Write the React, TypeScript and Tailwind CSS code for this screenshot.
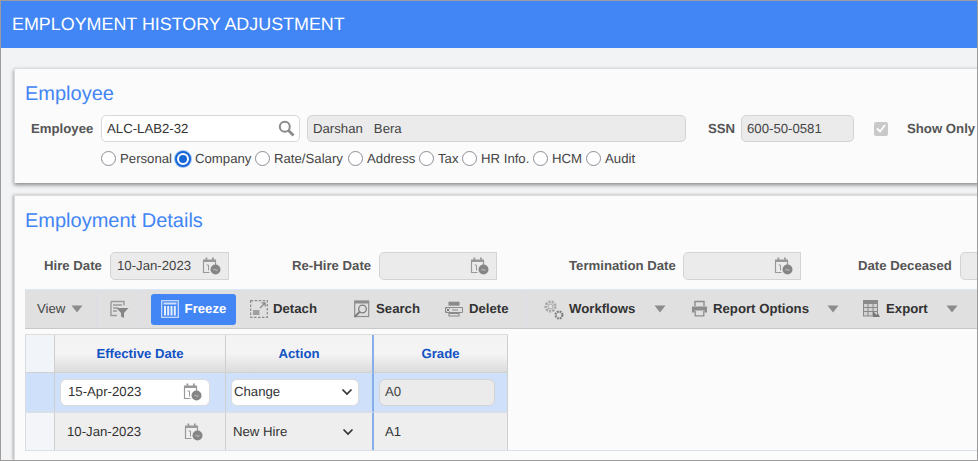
import React from "react";

const CalIcon = () => (
  <svg width="19" height="18" viewBox="0 0 19 18" fill="none" className="shrink-0">
    <path d="M1.500 3.500h12v5M7.500 15.500H1.500V3.500" stroke="#999" strokeWidth="1.200" />
    <rect x="1" y="2.500" width="13" height="2.500" fill="#999" />
    <rect x="3.500" y="0.500" width="1.800" height="4" fill="#999" />
    <rect x="10" y="0.500" width="1.800" height="4" fill="#999" />
    <path d="M4.500 8h2v5.500" stroke="#999" strokeWidth="1" />
    <circle cx="13.500" cy="12.500" r="5" fill="#858585" />
    <path d="M11.500 12.800q1-1 2 0t2 0" stroke="#d8d8d8" strokeWidth="0.900" />
  </svg>
);

const Arrow = ({ className = "" }: { className?: string }) => (
  <svg width="12" height="8" viewBox="0 0 12 8" className={`shrink-0 ${className}`}>
    <path d="M0.500 0.500h11L6 7.500z" fill="#8c8c8c" />
  </svg>
);

const FilterIcon = () => (
  <svg width="19" height="19" viewBox="0 0 19 19" fill="none">
    <path d="M1 1.500h13v4M1 1.500v14h6" stroke="#9a9a9a" strokeWidth="1.400" />
    <path d="M3 5h9M3 8h5M3 11h4" stroke="#9a9a9a" strokeWidth="1.300" />
    <path d="M6.500 8h12l-4.500 5v5l-3-1.500V13z" fill="#868686" />
  </svg>
);

const FreezeIcon = () => (
  <svg width="18" height="18" viewBox="0 0 18 18" fill="none">
    <rect x="0.700" y="0.700" width="16.600" height="16.600" stroke="#cfe0fb" strokeWidth="1.200" />
    <rect x="2.500" y="2.500" width="13" height="2" fill="#cfe0fb" />
    <path d="M4 6v9.500M7.200 6v9.500M10.500 6v9.500M13.800 6v9.500" stroke="#e6effd" strokeWidth="2" />
  </svg>
);

const DetachIcon = () => (
  <svg width="18" height="18" viewBox="0 0 18 18" fill="none">
    <rect x="0.700" y="0.700" width="16.600" height="16.600" stroke="#8a8a8a" strokeWidth="1.200" strokeDasharray="2.500 1.500" />
    <rect x="3" y="10" width="6.500" height="5" fill="#a0a0a0" />
    <path d="M10 8l5-5M11.500 2.800H15.200V6.500" stroke="#8a8a8a" strokeWidth="1.200" />
  </svg>
);

const SearchDocIcon = () => (
  <svg width="18" height="18" viewBox="0 0 18 18" fill="none">
    <rect x="1.700" y="1" width="14" height="15.500" stroke="#8d8d8d" strokeWidth="1.200" />
    <rect x="2" y="1" width="13.500" height="2.500" fill="#8d8d8d" />
    <circle cx="9.500" cy="9" r="3.800" stroke="#7d7d7d" strokeWidth="1.300" />
    <path d="M6.500 12l-5 5" stroke="#7d7d7d" strokeWidth="1.900" />
  </svg>
);

const DeleteIcon = () => (
  <svg width="19" height="16" viewBox="0 0 19 16" fill="none">
    <rect x="3.500" y="0.700" width="11" height="4" fill="#8a8a8a" />
    <path d="M0.500 6.500h17v5h-17z" stroke="#8a8a8a" strokeWidth="1" fill="#e0e0e0" />
    <path d="M1.500 7.500l3 3M4.500 7.500l-3 3" stroke="#777" strokeWidth="1" />
    <path d="M7 9h6M4 12.500h10v2.500H4z" stroke="#8a8a8a" strokeWidth="1.100" />
  </svg>
);

const GearsIcon = () => (
  <svg width="21" height="21" viewBox="0 0 21 21" fill="none">
    <circle cx="7.500" cy="7.500" r="4.800" stroke="#a8a8a8" strokeWidth="2.600" strokeDasharray="2.200 1.100" />
    <circle cx="7.500" cy="7.500" r="2.500" stroke="#a8a8a8" strokeWidth="1" />
    <circle cx="16" cy="16" r="3.400" stroke="#7d7d7d" strokeWidth="2.200" strokeDasharray="1.800 0.900" />
  </svg>
);

const PrinterIcon = () => (
  <svg width="17" height="17" viewBox="0 0 17 17" fill="none">
    <path d="M4 6V1.500h9V6" stroke="#8d8d8d" strokeWidth="1.400" />
    <path d="M1 6.500h15v6h-2.500v-2h-10v2H1z" fill="#8d8d8d" />
    <path d="M4.200 11v4.800h8.600V11" stroke="#8d8d8d" strokeWidth="1.300" />
  </svg>
);

const TableIcon = () => (
  <svg width="18" height="18" viewBox="0 0 18 18" fill="none">
    <rect x="0.500" y="0.500" width="14" height="15.500" fill="#d2d2d2" stroke="#8a8a8a" />
    <rect x="0.500" y="0.500" width="14" height="3.500" fill="#8a8a8a" />
    <path d="M5 4v12M10 4v12M1 7.500h13M1 11.500h13" stroke="#8a8a8a" />
    <path d="M10 11l3.500 4 1.500-1.500 2 3.500H10z" fill="#777" />
  </svg>
);

const Radio = ({ label, checked = false, className = "" }: { label: string; checked?: boolean; className?: string }) => (
  <label className={`flex items-center ${className}`}>
    {checked ? (
      <span className="w-[16px] h-[16px] rounded-full border-2 border-[#1666d8] bg-white flex items-center justify-center shadow-[0_0_0_1px_#9dc0f2]">
        <span className="w-[8px] h-[8px] rounded-full bg-[#1666d8]" />
      </span>
    ) : (
      <span className="w-[15px] h-[15px] rounded-full border-[1.5px] border-[#8e8c96] bg-white" />
    )}
    <span className="ml-[4px] text-[13.2px] text-[#444]">{label}</span>
  </label>
);

const Field = ({ children, className = "" }: { children?: React.ReactNode; className?: string }) => (
  <div className={`h-[27px] shrink-0 flex items-center rounded-[5px] border border-[#d3d3d3] bg-[#ebebeb] px-[5px] text-[13.2px] text-[#444] ${className}`}>
    {children}
  </div>
);

const DateField = ({ value, className = "" }: { value?: string; className?: string }) => (
  <div className={`h-[28px] shrink-0 flex items-center justify-between rounded-l-[5px] border border-[#d3d3d3] bg-[#ebebeb] pl-[6px] pr-[7px] text-[13.2px] text-[#444] whitespace-nowrap ${className}`}>
    <span>{value}</span>
    <CalIcon />
  </div>
);

const Bold = ({ children, className = "" }: { children: React.ReactNode; className?: string }) => (
  <span className={`text-[13.2px] font-bold text-[#555] whitespace-nowrap shrink-0 ${className}`}>{children}</span>
);

const ToolBtn = ({ icon, label, className = "" }: { icon: React.ReactNode; label: string; className?: string }) => (
  <div className={`flex items-center gap-[5px] shrink-0 text-[13.2px] font-bold text-[#333] ${className}`}>
    {icon}
    <span className="whitespace-nowrap">{label}</span>
  </div>
);

const Th = ({ children, className = "" }: { children: React.ReactNode; className?: string }) => (
  <div className={`flex items-center justify-center text-[13.2px] font-bold text-[#1253c4] bg-gradient-to-b from-[#f3f3f3] via-[#f4f4f4] to-[#dcdcdc] ${className}`}>
    {children}
  </div>
);

const Chevron = () => (
  <svg width="12" height="8" viewBox="0 0 12 8" fill="none">
    <path d="M1.500 1.500L6 6l4.500-4.500" stroke="#333" strokeWidth="1.700" />
  </svg>
);

export default function App() {
  return (
    <div className="w-[978px] h-[461px] overflow-hidden bg-[#f2f3f5] border border-[#9c9c9c] flex flex-col [text-rendering:geometricPrecision] font-['Liberation_Sans',Arial,sans-serif]">
      <header className="h-[47px] shrink-0 bg-[#4285f4] flex items-center pl-[11px] text-[17.9px] text-white">
        EMPLOYMENT HISTORY ADJUSTMENT
      </header>

      <section className="mt-[20px] ml-[13px] w-[1000px] h-[115px] shrink-0 bg-[#fbfbfb] border-t border-l border-[#dcdcdc] shadow-[0_2px_4px_rgba(0,0,0,0.45)] pl-[10px] pt-[13px]">
        <h2 className="text-[20px] leading-[24px] text-[#4285f4]">Employee</h2>
        <div className="mt-[9px] flex items-center">
          <Bold className="ml-[6px] w-[70px]">Employee</Bold>
          <div className="w-[199px] h-[27px] shrink-0 flex items-center justify-between rounded-[5px] border border-[#d8d8d8] bg-white pl-[5px] pr-[4px] text-[13.2px] text-[#333]">
            <span>ALC-LAB2-32</span>
            <svg width="17" height="17" viewBox="0 0 17 17" fill="none">
              <circle cx="6.800" cy="6.800" r="5" stroke="#8b8b8b" strokeWidth="2" />
              <path d="M10.500 10.500l5 5" stroke="#8b8b8b" strokeWidth="2.800" />
            </svg>
          </div>
          <Field className="ml-[7px] w-[379px]">Darshan&nbsp;&nbsp; Bera</Field>
          <Bold className="ml-[22px] w-[33px]">SSN</Bold>
          <Field className="w-[113px]">600-50-0581</Field>
          <span className="ml-[20px] w-[14px] h-[14px] shrink-0 rounded-[2px] bg-[#c9c9c9] flex items-center justify-center">
            <svg width="10" height="9" viewBox="0 0 10 9" fill="none">
              <path d="M1 4.500l3 3 5-6.500" stroke="#fff" strokeWidth="1.800" />
            </svg>
          </span>
          <Bold className="ml-[19px]">Show Only</Bold>
        </div>
        <div className="mt-[7px] ml-[76px] flex items-center">
          <Radio label="Personal" className="w-[74px]" />
          <Radio label="Company" checked className="w-[80px]" />
          <Radio label="Rate/Salary" className="w-[93px]" />
          <Radio label="Address" className="w-[71px]" />
          <Radio label="Tax" className="w-[43px]" />
          <Radio label="HR Info." className="w-[71px]" />
          <Radio label="HCM" className="w-[53px]" />
          <Radio label="Audit" />
        </div>
      </section>

      <section className="mt-[12px] ml-[13px] w-[1000px] flex-1 bg-[#fbfbfb] border-t border-l border-[#dcdcdc] shadow-[-1px_0_3px_rgba(0,0,0,0.3)] pl-[10px] pt-[13px]">
        <h2 className="text-[20px] leading-[24px] text-[#4285f4]">Employment Details</h2>
        <div className="mt-[19px] flex items-center">
          <Bold className="ml-[19px] w-[66px]">Hire Date</Bold>
          <DateField value="10-Jan-2023" className="w-[119px]" />
          <Bold className="ml-[63px] w-[87px]">Re-Hire Date</Bold>
          <DateField className="w-[118px]" />
          <Bold className="ml-[72px] w-[114px]">Termination Date</Bold>
          <DateField className="w-[118px]" />
          <Bold className="ml-[57px] w-[102px]">Date Deceased</Bold>
          <DateField className="w-[118px]" />
        </div>

        <div className="mt-[9px] h-[40px] flex items-center bg-[#e0e0e0] border-t border-[#dbe6f6] border-b-[#c8c8c8] border-b">
          <div className="flex items-center shrink-0 text-[13.2px] text-[#444] pl-[12px] w-[72px] h-full border-r border-[#dbdfe5]">
            <span>View</span>
            <Arrow className="ml-[6px]" />
          </div>
          <div className="w-[45px] shrink-0 h-full flex items-center justify-center border-r border-[#dbdfe5]">
            <FilterIcon />
          </div>
          <div className="ml-[9px] h-[31px] w-[85px] shrink-0 rounded-[3px] bg-[#4285f4] flex items-center justify-center gap-[6px] text-[13.2px] font-bold text-white">
            <FreezeIcon />
            Freeze
          </div>
          <ToolBtn className="ml-[14px] w-[103px]" icon={<DetachIcon />} label="Detach" />
          <ToolBtn className="w-[92px]" icon={<SearchDocIcon />} label="Search" />
          <ToolBtn className="w-[81px]" icon={<DeleteIcon />} label="Delete" />
          <span className="w-px h-full shrink-0 bg-[#dbdfe5]" />
          <ToolBtn className="ml-[16px] w-[111px]" icon={<GearsIcon />} label="Workflows" />
          <Arrow />
          <ToolBtn className="ml-[25px] w-[136px]" icon={<PrinterIcon />} label="Report Options" />
          <Arrow />
          <ToolBtn className="ml-[24px] w-[83px]" icon={<TableIcon />} label="Export" />
          <Arrow />
        </div>

        <div className="mt-[5px] w-[483px] grid grid-cols-[30px_171px_148px_134px] grid-rows-[38px_40px_37px] border-t border-[#dcdcdc]">
          <div className="bg-[#f1f4f9] border-l border-[#d8dde4] border-r border-r-[#cfcfcf] border-b border-b-[#d0d0d0]" />
          <Th className="border-r border-[#cfcfcf] border-b border-b-[#d0d0d0]">Effective Date</Th>
          <Th className="border-r-2 border-[#86aeea] border-b border-b-[#d0d0d0]">Action</Th>
          <Th className="border-r border-[#cfcfcf] border-b border-b-[#d0d0d0]">Grade</Th>

          <div className="bg-[#cfe0fa] border-l border-[#d8dde4] border-r border-r-[#cfcfcf] border-b-2 border-b-[#d8dfe9]" />
          <div className="bg-[#cfe0fa] border-r border-[#cfcfcf] border-b-2 border-b-[#d8dfe9] flex items-center px-[5px]">
            <div className="w-[150px] h-[27px] rounded-[6px] bg-white border border-[#dcdcdc] flex items-center justify-between pl-[7px] pr-[7px] text-[13.2px] text-[#333]">
              <span>15-Apr-2023</span>
              <CalIcon />
            </div>
          </div>
          <div className="bg-[#cfe0fa] border-r-2 border-[#86aeea] border-b-2 border-b-[#d8dfe9] flex items-center px-[5px]">
            <div className="w-[128px] h-[27px] rounded-[6px] bg-white border border-[#dcdcdc] flex items-center justify-between pl-[2px] pr-[5px] text-[13.2px] text-[#333]">
              <span>Change</span>
              <Chevron />
            </div>
          </div>
          <div className="bg-[#cfe0fa] border-r border-[#cfcfcf] border-b-2 border-b-[#d8dfe9] flex items-center px-[5px]">
            <div className="w-[116px] h-[27px] rounded-[6px] bg-[#ebebeb] border border-[#d3d3d3] flex items-center pl-[5px] text-[13.2px] text-[#444]">
              A0
            </div>
          </div>

          <div className="bg-[#f3f5f9] border-l border-[#d8dde4] border-r border-r-[#cfcfcf]" />
          <div className="bg-[#eeeeee] border-r border-[#cfcfcf] flex items-center justify-between pl-[12px] pr-[22px] text-[13.2px] text-[#333]">
            <span>10-Jan-2023</span>
            <CalIcon />
          </div>
          <div className="bg-[#eeeeee] border-r-2 border-[#86aeea] flex items-center justify-between pl-[7px] pr-[18px] text-[13.2px] text-[#333]">
            <span>New Hire</span>
            <Chevron />
          </div>
          <div className="bg-[#eeeeee] border-r border-[#cfcfcf] flex items-center pl-[11px] text-[13.2px] text-[#333]">A1</div>
        </div>
        <div className="h-px bg-[#d8e0ec]" />
      </section>
    </div>
  );
}
